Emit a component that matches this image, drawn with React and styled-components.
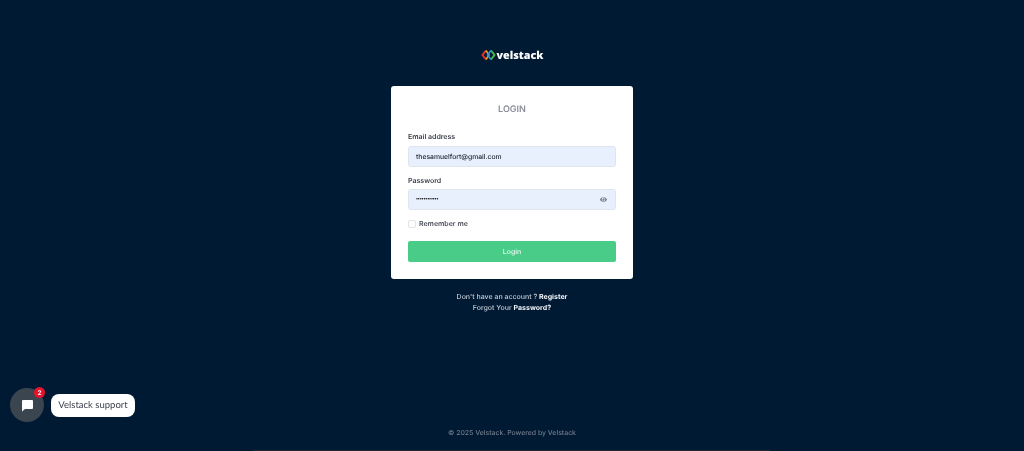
import React from "react";
import styled, { createGlobalStyle } from "styled-components";
import { FaEye } from "react-icons/fa";

const GlobalStyle = createGlobalStyle`
  html, body { margin: 0; padding: 0; height: 100%; background: #001a33; }
  body { font-family: Inter, "Liberation Sans", sans-serif; text-rendering: geometricPrecision; }
  * { box-sizing: border-box; }
`;

const Page = styled.div`
  height: 451px;
  overflow: hidden;
  display: flex;
  flex-direction: column;
  align-items: center;
  position: relative;
  background: #001a33;
  padding-top: 48px;
  will-change: transform;
`;

const Logo = styled.div`
  display: flex;
  align-items: center;
  gap: 1px;
  height: 14px;
  margin-bottom: 24px;
  color: #fff;
  font-family: "Open Sans", sans-serif;
  font-size: 10.8px;
  font-weight: 800;
`;

const Card = styled.form`
  width: 242px;
  height: 193px;
  flex-shrink: 0;
  background: #fff;
  border-radius: 3px;
  padding: 18px 17px 17px;
  display: flex;
  flex-direction: column;
`;

const Title = styled.h1`
  margin: 0 0 15px;
  font-size: 9px;
  line-height: 12px;
  font-weight: 600;
  color: #8b8f9c;
  text-align: center;
`;

const Field = styled.div`
  display: flex;
  flex-direction: column;
  margin-bottom: 8px;
`;

const Label = styled.label`
  font-size: 7px;
  line-height: 11px;
  font-weight: 600;
  color: #3a3f4a;
  margin-bottom: ${props => props.gap}px;
`;

const InputBox = styled.div`
  height: 21px;
  flex-shrink: 0;
  background: #e8f0fe;
  border: 1px solid #dfe4ee;
  border-radius: 3px;
  display: flex;
  align-items: center;
  justify-content: space-between;
  padding: 0 8px 0 7px;
  color: #222a38;
  font-size: 6.8px;
  font-weight: 500;
`;

const Dots = styled.span`
  font-size: 4.6px;
  font-weight: 800;
  letter-spacing: -0.15px;
  color: #000;
`;

const EyeIcon = styled(FaEye)`
  width: 7px;
  height: 7px;
  color: #7b808c;
`;

const Remember = styled.div`
  display: flex;
  align-items: center;
  gap: 3px;
  margin: 1px 0 13px;
  height: 11px;
  font-size: 7px;
  font-weight: 600;
  color: #4a4e5a;
`;

const Check = styled.span`
  width: 8px;
  height: 8px;
  border: 1px solid #dfe2e8;
  border-radius: 2px;
  background: #fff;
`;

const LoginButton = styled.div`
  height: 21px;
  flex-shrink: 0;
  background: #48cc88;
  border-radius: 2px;
  color: #e9f8f0;
  font-size: 7px;
  font-weight: 500;
  display: flex;
  align-items: center;
  justify-content: center;
`;

const Links = styled.div`
  margin-top: 13px;
  text-align: center;
  font-size: 7px;
  line-height: 10.5px;
  font-weight: 500;
  color: #c3ccd6;
  b { color: #eef2f6; font-weight: 700; }
`;

const Footer = styled.div`
  position: absolute;
  bottom: 14px;
  left: 0;
  right: 0;
  text-align: center;
  font-size: 6.9px;
  font-weight: 500;
  color: #717b8a;
`;

const BottomEdge = styled.div`
  position: absolute;
  bottom: 0;
  left: 253px;
  width: 517px;
  height: 1px;
  background: #22282e;
`;

const ChatWrap = styled.div`
  position: absolute;
  left: 10px;
  top: 388px;
  display: flex;
  align-items: center;
  gap: 7px;
`;

const ChatButton = styled.div`
  width: 34px;
  height: 34px;
  border-radius: 50%;
  background: #3a4550;
  display: flex;
  align-items: center;
  justify-content: center;
  position: relative;
`;

const Badge = styled.span`
  position: absolute;
  top: -1px;
  right: -1px;
  width: 11px;
  height: 11px;
  border-radius: 50%;
  background: #e8122d;
  color: #fff;
  font-size: 6.5px;
  font-weight: 600;
  display: flex;
  align-items: center;
  justify-content: center;
`;

const ChatLabel = styled.div`
  height: 23px;
  width: 84px;
  background: #fff;
  border-radius: 8px;
  color: #3e4350;
  font-family: Lato, sans-serif;
  font-size: 9.5px;
  display: flex;
  align-items: center;
  justify-content: center;
`;

export default function App() {
  return (
    <>
      <GlobalStyle />
      <Page>
        <Logo>
          <svg width="15" height="12" viewBox="0 0 15 12">
            <path d="M5 1.5 1.5 6 5 10.5" fill="none" stroke="#e5322d" strokeWidth="2" />
            <path d="M5 1.5 8 6 5 10.5" fill="none" stroke="#e8a020" strokeWidth="1.6" />
            <path d="M10 1.5 6.5 6l3.5 4.5" fill="none" stroke="#2f8fd8" strokeWidth="1.6" />
            <path d="M10 1.5 13.5 6 10 10.5" fill="none" stroke="#45b649" strokeWidth="2" />
          </svg>
          <span>velstack</span>
        </Logo>
        <Card>
          <Title>LOGIN</Title>
          <Field>
            <Label gap={4}>Email address</Label>
            <InputBox>thesamuelfort@gmail.com</InputBox>
          </Field>
          <Field>
            <Label gap={3}>Password</Label>
            <InputBox>
              <Dots>••••••••••••</Dots>
              <EyeIcon />
            </InputBox>
          </Field>
          <Remember>
            <Check />
            Remember me
          </Remember>
          <LoginButton>Login</LoginButton>
        </Card>
        <Links>
          <div>Don't have an account ? <b>Register</b></div>
          <div>Forgot Your <b>Password?</b></div>
        </Links>
        <ChatWrap>
          <ChatButton>
            <svg width="13" height="13" viewBox="0 0 13 13">
              <path d="M2 1h9a1 1 0 0 1 1 1v7a1 1 0 0 1-1 1H4l-3 2.5V2a1 1 0 0 1 1-1z" fill="#fff" />
            </svg>
            <Badge>2</Badge>
          </ChatButton>
          <ChatLabel>Velstack support</ChatLabel>
        </ChatWrap>
        <Footer>© 2025 Velstack. Powered by Velstack</Footer>
        <BottomEdge />
      </Page>
    </>
  );
}
